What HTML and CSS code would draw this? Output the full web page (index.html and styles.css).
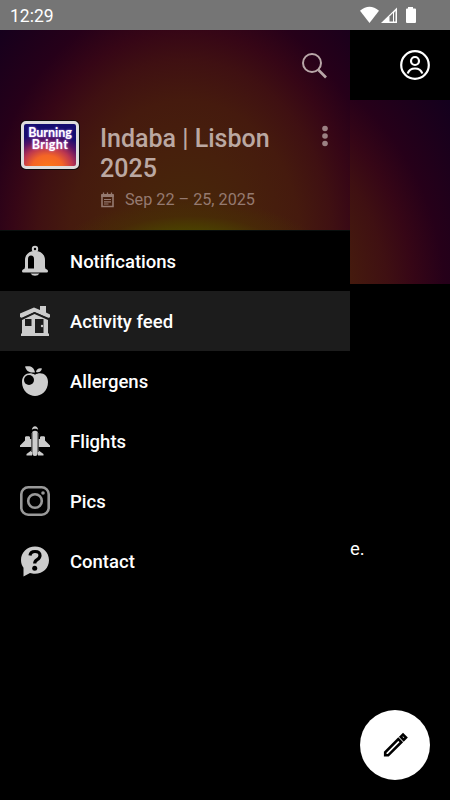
FILE: index.html
```html
<!DOCTYPE html>
<html lang="en">
  <head>
    <meta charset="utf-8">
    <title>Indaba | Lisbon 2025</title>
    <link rel="stylesheet" href="styles.css">
  </head>

  <body>
    <div class="status">
      <span class="clock">12:29</span>
      <svg class="status-icons" width="56" height="18" viewBox="0 0 56 18">
        <path fill="#fff" d="M0 4.7Q9.500-3.200 19 4.700L9.500 17z"/>
        <path fill="#fff" d="M37 1.500V17H21z"/>
        <path fill="#757575" d="M35.500 5V15.500H34V6.500z"/>
        <path fill="#757575" d="M29.500 10.500L33 7v8.500h-3.500z"/>
        <path fill="#fff" d="M46 3.500q0-1 1-1h1V1h5v1.500h2q1 0 1 1V16q0 1-1 1h-8q-1 0-1-1z"/>
      </svg>
    </div>

    <div class="app">
      <div class="drawer">
        <div class="header">
          <div class="tools">
            <svg width="28" height="28" viewBox="0 0 28 28" fill="none" stroke="#b9a7a8">
              <circle cx="11" cy="11" r="9" stroke-width="2"/>
              <path d="M17.500 18l7.500 7.500" stroke-width="2.700"/>
            </svg>
          </div>
          <div class="event">
            <div class="logo"><span>Burning</span><span class="second">Bright</span></div>
            <div class="info">
              <h1>Indaba | Lisbon 2025</h1>
              <div class="date">
                <svg width="15" height="16" viewBox="0 0 15 16" fill="none" stroke="#957a70">
                  <path d="M2 3v11.500h11V3" stroke-width="1.600"/>
                  <path d="M1.200 3.500h12.600" stroke-width="3"/>
                  <path d="M3.500 0.500v3M7.500 0.500v3M11.500 0.500v3" stroke-width="1.300"/>
                  <path d="M4 7.500h7M4 9.800h7M4 12h4.500" stroke-width="1.200"/>
                </svg>
                <span>Sep 22 – 25, 2025</span>
              </div>
            </div>
            <svg class="more" width="6" height="22" viewBox="0 0 6 22" fill="#9b8183">
              <circle cx="3" cy="3.500" r="2.800"/>
              <circle cx="3" cy="11" r="2.800"/>
              <circle cx="3" cy="18.500" r="2.800"/>
            </svg>
          </div>
        </div>

        <div class="menu">
          <div class="item">
            <svg width="30" height="32" viewBox="0 0 30 32">
              <circle cx="15" cy="4" r="2.200" fill="none" stroke="#ccc" stroke-width="2"/>
              <path fill="#ccc" d="M15 6c-6 0-10 3.500-10 9v7q0 2-2 2.500-1 .5-1 1.700 0 1.300 1.300 1.300h23.400q1.300 0 1.300-1.300 0-1.200-1-1.700-2-.5-2-2.500v-7c0-5.500-4-9-10-9z"/>
              <path fill="#ccc" d="M10.500 28.500h9q-1.500 2.300-4.500 2.300t-4.500-2.300z"/>
              <path fill="#000" d="M8 23.500V14q0-3.500 3-3.500t3 3.500v9.500z"/>
            </svg>
            <span>Notifications</span>
          </div>
          <div class="item active">
            <svg width="30" height="32" viewBox="0 0 30 32">
              <path fill="#ccc" d="M2 15l12.500-6L28 15v13.500h1V31H1v-2.500h1z"/>
              <path fill="#ccc" d="M0 8.500L14 2.500l6 2.600V1h6v6.600l4 1.900v2.800l-2 .7L14.500 7 2 13l-2-1z"/>
              <path d="M1 13.800L14.500 7.600 29 13.800" fill="none" stroke="#1c1c1c" stroke-width="1.200"/>
              <path fill="#1c1c1c" d="M5 14h6.500v7H5zM15 14h8.500v14H15z"/>
              <circle cx="22" cy="21" r="1.200" fill="#ccc"/>
            </svg>
            <span>Activity feed</span>
          </div>
          <div class="item">
            <svg width="30" height="32" viewBox="0 0 30 32">
              <path fill="#ccc" d="M15 9.800C9 6 2 9.500 2 17c0 9 7 14 13 14s13-5 13-14C28 9.500 21 6 15 9.800z"/>
              <path fill="#ccc" d="M5 1.500c5.500-1 9 .5 10 6-5 .5-8.500-.8-10-6zM16 7q1-4.500 6-3.500-1 4.500-6 3.500z"/>
              <circle cx="9" cy="15" r="5" fill="#000"/>
            </svg>
            <span>Allergens</span>
          </div>
          <div class="item">
            <svg width="30" height="32" viewBox="0 0 30 32">
              <path fill="#ccc" d="M12 14h-2v-2l-1-.8H6L5 12v3.500l-5 5V22h12zM18 14h2v-2l1-.8h3l1 .8v3.500l5 5V22H18zM12 25l-5.500 4v1.500H12zM18 25l5.500 4v1.500H18z"/>
              <path d="M12.300 6.800q2.700-2 5.400 0V28q0 3-2.700 3t-2.700-3z" fill="#ccc"/>
              <path d="M11.700 8v19M18.300 8v19" stroke="#444" stroke-width="1"/>
              <path d="M11.800 4.800Q12.500 1.200 15 1.200t3.200 3.600l-2-1h-2.400z" fill="#ccc"/>
            </svg>
            <span>Flights</span>
          </div>
          <div class="item">
            <svg width="30" height="32" viewBox="0 0 30 32" fill="none" stroke="#999">
              <rect x="1.300" y="2.300" width="27.400" height="27.400" rx="7" stroke-width="2.600"/>
              <circle cx="15" cy="16" r="6.800" stroke-width="2.600"/>
              <circle cx="23" cy="8" r="1.800" fill="#999" stroke="none"/>
            </svg>
            <span>Pics</span>
          </div>
          <div class="item">
            <svg width="30" height="32" viewBox="0 0 30 32">
              <path fill="#ccc" d="M15 1.500C7 1.500 1 7.500 1 15c0 3 .9 5.500 2.500 7.700v8.800l6.500-3.500c1.500.5 3 .8 5 .8 8 0 14-6 14-13.600C29 7.500 23 1.500 15 1.500z"/>
              <path d="M10 10.500q.500-4 5-4 5 0 5 4 0 2.500-2.800 4.200-2.500 1.500-2.500 3.800" fill="none" stroke="#000" stroke-width="3.200"/>
              <circle cx="14.700" cy="23.300" r="2.500" fill="#000"/>
            </svg>
            <span>Contact</span>
          </div>
        </div>
      </div>

      <div class="page">
        <div class="topbar">
          <svg width="30" height="30" viewBox="0 0 30 30" fill="none" stroke="#fff" stroke-width="2.200">
            <circle cx="15" cy="15" r="13.800"/>
            <circle cx="15" cy="11" r="4"/>
            <path d="M7.700 23.500q1.600-5 7.300-5t7.300 5"/>
          </svg>
        </div>
        <div class="banner"></div>
        <p class="message">e.</p>
        <div class="compose">
          <svg width="26" height="26" viewBox="0 0 26 26" fill="none" stroke="#000" stroke-width="2.600">
            <path d="M3.200 23.300v-3L16.300 7.200l3 3L6.200 23.300z"/>
            <path d="M18.700 4.800l2.300-2.300 3 3-2.300 2.300z"/>
          </svg>
        </div>
      </div>
    </div>
  </body>
</html>
```

FILE: styles.css
```css
body {
  margin: 0;
  height: 800px;
  display: flex;
  flex-direction: column;
  overflow: hidden;
  background-color: #000;
  color: #fff;
  font-family: Roboto, sans-serif;
}

svg {
  display: block;
  flex-shrink: 0;
}

.status {
  height: 30px;
  box-sizing: border-box;
  padding: 0 34px 0 10px;
  display: flex;
  align-items: center;
  justify-content: space-between;
  background-color: #757575;
}

.clock {
  font-size: 17.5px;
  line-height: 30px;
  padding-top: 2px;
}

.app {
  flex: 1;
  display: flex;
}

.drawer {
  width: 350px;
}

.header {
  height: 200px;
  background-image:
    radial-gradient(130px 50px at 190px 220px, #4c4500 0%, #4a4000 40%, rgba(72, 46, 5, 0.6) 68%, rgba(71, 38, 9, 0) 100%),
    radial-gradient(200px 250px at 185px 215px, #472a08 0%, #47200c 38%, #451a0e 58%, #3f1012 74%, #360616 86%, #260019 100%, #13001d 130%);
  border-bottom: 1px solid #090f0e;
}

.tools {
  height: 70px;
  box-sizing: border-box;
  padding: 22px 21px 0 0;
  display: flex;
  justify-content: flex-end;
}

.event {
  display: flex;
  align-items: flex-start;
  padding: 21px 22px 0 21px;
}

.logo {
  width: 58px;
  height: 48px;
  box-sizing: border-box;
  border: 3px solid #ddd;
  border-radius: 5px;
  box-shadow: 0 0 0 1px #0b0b0b;
  background-image: radial-gradient(44px 36px at 45% 105%, #fb7a18 0%, #f46526 35%, #bb3650 58%, #571366 80%, #140d70 100%);
  display: flex;
  flex-direction: column;
  align-items: center;
  font-family: Lato, sans-serif;
  font-size: 12.5px;
  font-weight: 700;
  line-height: 12px;
  text-shadow: 0 0 2px #d8a0ff;
  padding-top: 3px;
}

.second {
  letter-spacing: 0.4px;
}

.info {
  flex: 1;
  padding: 3px 0 0 21px;
}

.info h1 {
  margin: 0;
  width: 190px;
  font-size: 25px;
  font-weight: 500;
  line-height: 30px;
  color: #bba8a2;
}

.date {
  display: flex;
  align-items: center;
  gap: 10px;
  margin-top: 5px;
  font-size: 16.2px;
  line-height: 22px;
  color: #957a70;
}

.more {
  margin-top: 4px;
}

.item {
  height: 60px;
  display: flex;
  align-items: center;
  gap: 20px;
  padding-left: 20px;
  font-size: 18.5px;
  font-weight: 500;
}

.item span {
  padding-top: 2px;
}

.active {
  background-color: #1c1c1c;
}

.page {
  flex: 1;
  display: flex;
  flex-direction: column;
}

.topbar {
  height: 70px;
  padding-right: 20px;
  display: flex;
  align-items: center;
  justify-content: flex-end;
}

.banner {
  height: 184px;
  background-image: radial-gradient(220px 250px at -125px 200px, #47200c 38%, #451a0e 58%, #3f1012 74%, #360616 86%, #260019 100%, #13001d 130%);
}

.message {
  margin: 253px 0 0;
  font-size: 18.5px;
  line-height: 24px;
}

.compose {
  width: 70px;
  height: 70px;
  margin: auto 20px 20px auto;
  border-radius: 50%;
  background-color: #fff;
  display: flex;
  align-items: center;
  justify-content: center;
}
```
